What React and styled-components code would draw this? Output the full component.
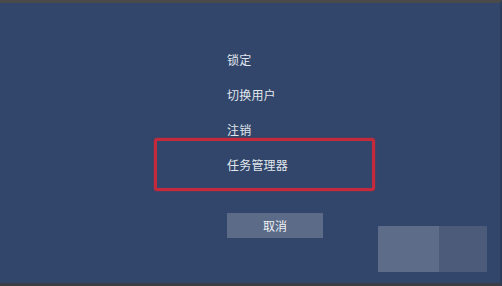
import React from "react";
import styled, { createGlobalStyle } from "styled-components";

const Global = createGlobalStyle`
  html, body { margin: 0; padding: 0; background: #31466a; overflow: hidden; }
  #root { width: 502px; height: 286px; }
`;

const Screen = styled.div`
  position: relative;
  width: 502px;
  height: 286px;
  box-sizing: border-box;
  background: #31466a;
  border-top: 3px solid #4a4a4b;
  border-bottom: 3px solid #3a3e47;
  border-right: 2px solid #2b3c5a;
  display: flex;
  flex-direction: column;
  padding: 39px 0 0 227px;
  font-family: "Noto Sans CJK SC", "Microsoft YaHei", sans-serif;
  overflow: hidden;
`;

const Menu = styled.ul`
  list-style: none;
  margin: 0;
  padding: 0;
  display: flex;
  flex-direction: column;
`;

const Item = styled.li`
  position: relative;
  height: 35px;
  line-height: 35px;
  font-size: 12px;
  color: #e2e6ee;
  letter-spacing: 0.2px;
`;

const Highlight = styled.span`
  position: absolute;
  left: -73px;
  top: -9px;
  width: 221px;
  height: 53px;
  box-sizing: border-box;
  border: 3px solid #c42a3c;
  border-radius: 3px;
  box-shadow: 0 0 2px rgba(196, 42, 60, 0.6);
  pointer-events: none;
`;

const CancelButton = styled.button`
  margin-top: 31px;
  width: 96px;
  height: 25px;
  border: none;
  padding: 0;
  background: #5b6b88;
  color: #f0f2f6;
  font-family: inherit;
  font-size: 12px;
  line-height: 25px;
  text-align: center;
`;

const Tiles = styled.div`
  position: absolute;
  left: 378px;
  top: 223px;
  display: flex;
`;

const Tile = styled.div`
  width: ${(p) => p.$w}px;
  height: 46px;
  background: ${(p) => p.$bg};
`;

export default function App() {
  return (
    <>
      <Global />
      <Screen>
        <Menu>
          <Item>锁定</Item>
          <Item>切换用户</Item>
          <Item>注销</Item>
          <Item>
            任务管理器
            <Highlight />
          </Item>
        </Menu>
        <CancelButton>取消</CancelButton>
        <Tiles>
          <Tile $w={61} $bg="#5c6c89" />
          <Tile $w={48} $bg="#4b5b79" />
        </Tiles>
      </Screen>
    </>
  );
}
